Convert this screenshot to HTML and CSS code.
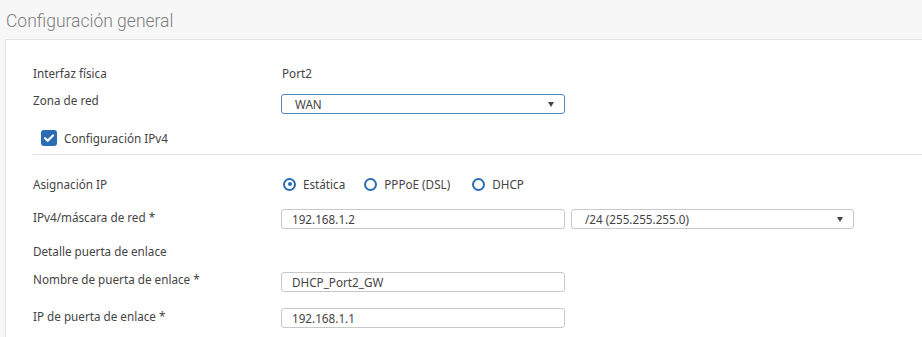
FILE: index.html
```html
<!DOCTYPE html>
<html lang="es">
<head>
  <meta charset="UTF-8" />
  <title>Configuración general</title>
  <link rel="stylesheet" href="styles.css">
</head>
<body>
  <h1 class="title">Configuración general</h1>

  <form class="panel">
    <div class="row r1">
      <span class="label">Interfaz física</span>
      <span class="value">Port2</span>
    </div>

    <div class="row r2">
      <span class="label">Zona de red</span>
      <div class="select focused w-main"><span>WAN</span><i class="arrow"></i></div>
    </div>

    <div class="row r3">
      <label class="check"><span class="box"><svg viewBox="0 0 16 16" width="16" height="16"><path d="M4 8.2l2.7 2.6L12 5.4" fill="none" stroke="#fff" stroke-width="2.2" stroke-linecap="round" stroke-linejoin="round"/></svg></span>Configuración IPv4</label>
    </div>

    <div class="sep"></div>

    <div class="row r4">
      <span class="label">Asignación IP</span>
      <div class="radios">
        <label class="radio on"><span class="dot"></span>Estática</label>
        <label class="radio"><span class="dot"></span>PPPoE (DSL)</label>
        <label class="radio"><span class="dot"></span>DHCP</label>
      </div>
    </div>

    <div class="row r5">
      <span class="label">IPv4/máscara de red *</span>
      <div class="input w-main">192.168.1.2</div>
      <div class="select w-mask"><span>/24 (255.255.255.0)</span><i class="arrow"></i></div>
    </div>

    <div class="row r6">
      <span class="label">Detalle puerta de enlace</span>
    </div>

    <div class="row r7">
      <span class="label">Nombre de puerta de enlace *</span>
      <div class="input w-main">DHCP_Port2_GW</div>
    </div>

    <div class="row r8">
      <span class="label">IP de puerta de enlace *</span>
      <div class="input w-main">192.168.1.1</div>
    </div>
  </form>
</body>
</html>
```

FILE: styles.css
```css
:root {
  --text: #444; --border: #c9c9c9; --line: #e2e2e2;
  --blue: #2b6cb3; --bg: #f7f7f7;
}
body { margin: 0; background: var(--bg); font-family: "Noto Sans", "Open Sans", sans-serif; font-size: 11.7px; color: var(--text); overflow: hidden; }
.title { margin: 0; height: 39px; padding-left: 6px; font-family: Roboto, sans-serif; font-weight: 300; font-size: 17.5px; line-height: 42px; color: #7d7d7d; }
.panel { margin-left: 5px; background: #fff; border: 1px solid var(--line); border-right: none; border-bottom: none; height: 298px; padding: 22px 0 0 27px; box-sizing: border-box; }
.row { display: flex; align-items: flex-start; line-height: 20px; }
.label { width: 249px; flex: none; }
.r1 { height: 28px; }
.r2 { height: 28px; }
.r3 { height: 36px; }
.r4 { height: 33px; margin-top: 19px; }
.r5 { height: 34px; }
.r6 { height: 28px; }
.r7 { height: 37px; }
.r8 { height: 30px; }
.r1 .label, .r1 .value { margin-top: 1px; }
.r2 .select { margin-top: 4px; }
.r5 .input, .r5 .select { margin-top: 2px; }
.r7 .input { margin-top: 3px; }
.r8 .input { margin-top: 2px; }
/* controls */
.input, .select { height: 20px; box-sizing: border-box; border: 1px solid var(--border); border-radius: 3px; line-height: 18px; padding-left: 10px; position: relative; background: #fff; }
.select { padding-left: 13px; }
.select.focused { border-color: #4f86c2; }
.w-main { width: 284px; margin-left: -1px; }
.w-mask { width: 283px; margin-left: 6px; }
.arrow { position: absolute; right: 10px; top: 7px; width: 0; height: 0; border-left: 3px solid transparent; border-right: 3px solid transparent; border-top: 5px solid #444; }
.check { display: flex; align-items: center; margin: 10px 0 0 8px; }
.box { width: 16px; height: 16px; border-radius: 3px; background: var(--blue); margin-right: 7px; display: flex; }
.sep { height: 1px; background: var(--line); margin-right: -2px; }
.radios { display: flex; }
.radio { display: flex; align-items: center; margin-right: 21px; }
.radio:first-child { margin-right: 18px; }
.dot { width: 13px; height: 13px; border: 2px solid var(--blue); border-radius: 50%; box-sizing: border-box; margin-right: 7px; position: relative; margin-left: 1px; }
.radio.on .dot::after { content: ""; position: absolute; left: 2.5px; top: 2.5px; width: 4px; height: 4px; border-radius: 50%; background: var(--blue); }
```
